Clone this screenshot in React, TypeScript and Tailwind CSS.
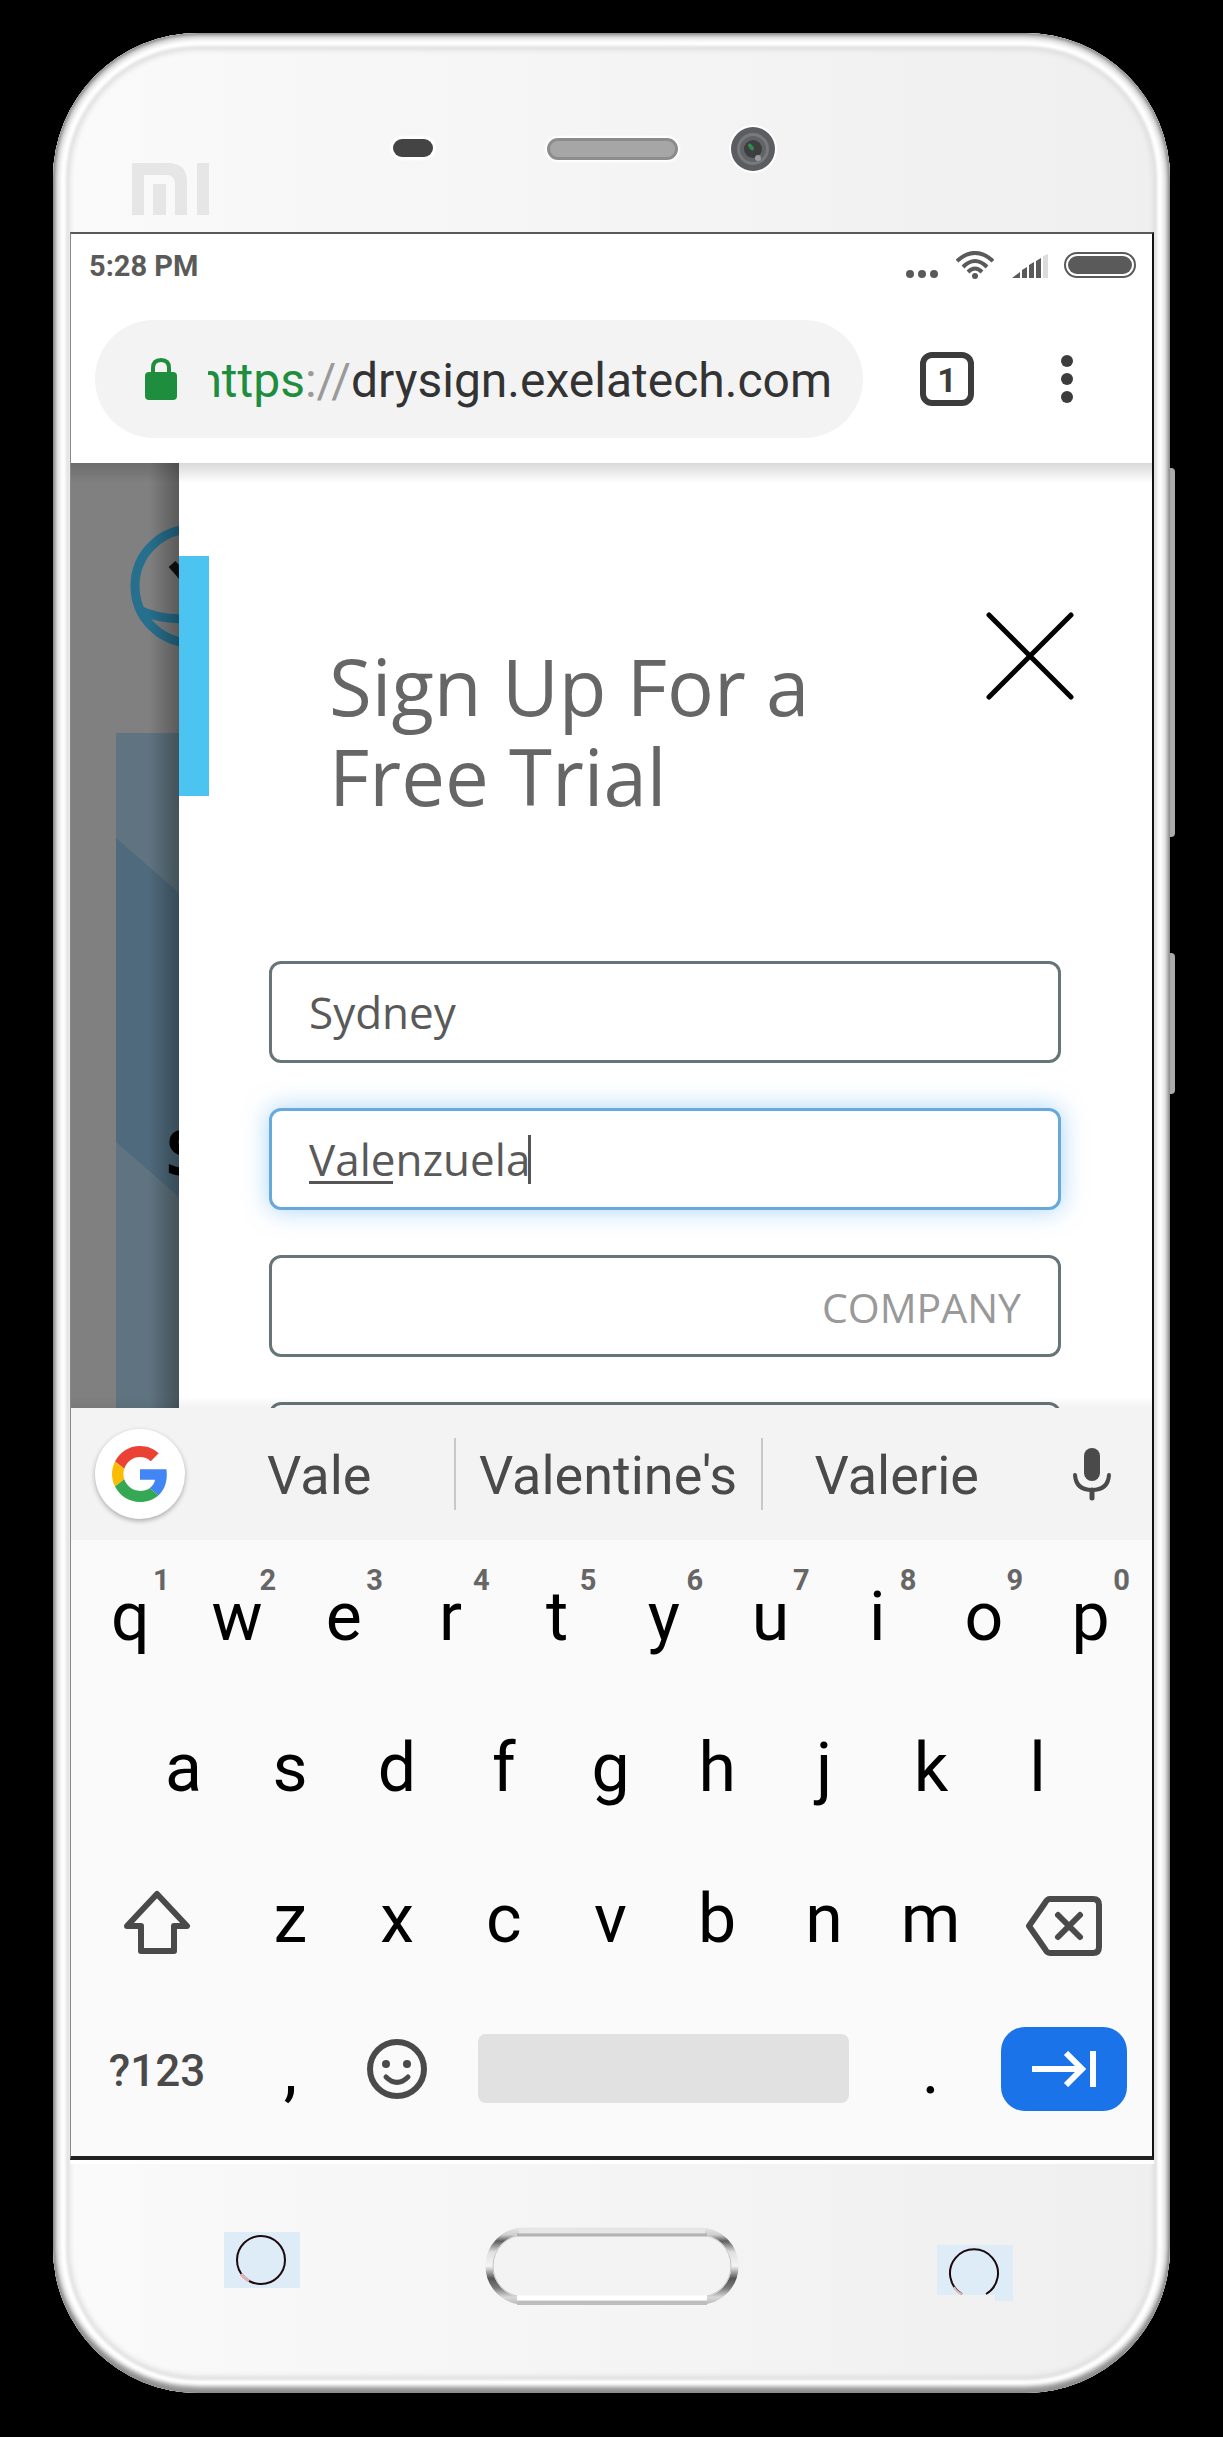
import React from "react";

const topRow = ["q", "w", "e", "r", "t", "y", "u", "i", "o", "p"];
const homeRow = ["a", "s", "d", "f", "g", "h", "j", "k", "l"];
const bottomRow = ["z", "x", "c", "v", "b", "n", "m"];

function MiLogo() {
  return (
    <svg viewBox="0 0 77 52" className="h-[52px] w-[77px]" fill="#e6e6e6" aria-label="Mi" role="img">
      <path d="M0 0H36Q55 0 55 19V52H43V21Q43 12 34 12H12V52H0Z" />
      <rect x="21" y="21" width="13" height="31" />
      <rect x="65" y="0" width="12" height="52" />
    </svg>
  );
}

function Camera() {
  return (
    <svg viewBox="0 0 48 48" className="size-12" aria-hidden="true">
      <circle cx="24" cy="24" r="24" fill="#fff" />
      <circle cx="24" cy="24" r="22" fill="#5b5d60" />
      <circle cx="24" cy="24" r="16" fill="#77797c" />
      <circle cx="24" cy="24" r="13" fill="#616366" />
      <circle cx="24" cy="24" r="9" fill="#3c3e40" />
      <ellipse cx="22" cy="22" rx="2" ry="4" fill="#2f8a50" transform="rotate(-35 22 22)" />
      <circle cx="29" cy="33" r="3" fill="#9a9b9d" />
    </svg>
  );
}

function StatusBar() {
  return (
    <div className="flex h-[62px] items-center justify-between pr-4 pl-[18px]">
      <span className="pt-[2px] text-[29px] leading-8 font-bold text-[#5a5a5a]">5:28 PM</span>
      <div className="flex items-center">
        <svg viewBox="0 0 32 28" className="mr-[18px] h-7 w-8" fill="#5a5a5a" aria-hidden="true">
          <circle cx="4" cy="23" r="4" />
          <circle cx="16" cy="23" r="4" />
          <circle cx="28" cy="23" r="4" />
        </svg>
        <svg viewBox="0 0 38 28" className="mr-[18px] h-7 w-[38px]" fill="none" stroke="#5a5a5a" strokeWidth="4" aria-label="Wi-Fi" role="img">
          <path d="M1 10Q19 -6 37 10" />
          <path d="M7 16Q19 4 31 16" />
          <path d="M12 21Q19 14 26 21" />
          <circle cx="19" cy="25" r="3" fill="#5a5a5a" stroke="none" />
        </svg>
        <svg viewBox="0 0 37 28" className="mr-[15px] h-7 w-[37px]" fill="#5a5a5a" aria-label="Signal" role="img">
          <path d="M0 27L8 21V27Z" />
          <path d="M10 27V19L15 16V27Z" />
          <path d="M17 27V14L22 11V27Z" />
          <path d="M24 27V10L29 7V27Z" />
          <path d="M31 27V5L36 3V27Z" fill="#dcdcdc" />
        </svg>
        <div className="h-[26px] w-[72px] rounded-full border-2 border-[#5a5a5a] p-[2px]">
          <div className="h-full rounded-full bg-[#5a5a5a]" />
        </div>
      </div>
    </div>
  );
}

function BrowserBar() {
  return (
    <div className="flex items-center pt-6 pr-[59px] pb-[25px] pl-6">
      <div className="flex h-[118px] min-w-0 flex-1 items-center rounded-full bg-[#f3f3f4] pr-[31px] pl-[50px]">
        <svg viewBox="0 0 32 42" className="h-[42px] w-8 shrink-0" aria-label="Secure" role="img">
          <rect x="0" y="14" width="32" height="28" rx="4" fill="#1e8e3e" />
          <path d="M8 16V10Q8 2 16 2Q24 2 24 10V16" fill="none" stroke="#1e8e3e" strokeWidth="4" />
        </svg>
        <a href="#address" className="ml-[31px] flex min-w-0 flex-1 justify-end overflow-hidden pt-1 text-[48px] leading-[60px] whitespace-nowrap">
          <span className="text-[#1e8e3e]">https</span>
          <span className="text-[#9a9a9a]">://</span>
          <span className="text-[#333333]">drysign.exelatech.com</span>
        </a>
      </div>
      <button aria-label="Open tabs" className="ml-[57px] flex size-[54px] items-center justify-center rounded-xl border-[6px] border-[#3c3c3c] pt-[2px] text-[34px] leading-none font-bold text-[#3c3c3c]">
        1
      </button>
      <button aria-label="Menu" className="ml-[67px] flex h-[54px] w-[52px] flex-col items-center justify-between py-[3px]">
        <span className="size-3 rounded-full bg-[#3c3c3c]" />
        <span className="size-3 rounded-full bg-[#3c3c3c]" />
        <span className="size-3 rounded-full bg-[#3c3c3c]" />
      </button>
    </div>
  );
}

function DimmedPage() {
  return (
    <div className="relative flex w-[108px] shrink-0 flex-col overflow-hidden bg-[#808080]" aria-hidden="true">
      <div className="flex h-[270px] pt-[61px] pl-[59px]">
        <svg viewBox="0 0 124 124" className="size-[124px] shrink-0" fill="none" stroke="#266f8d" strokeWidth="9">
          <circle cx="62" cy="62" r="57" />
          <path d="M9 86Q40 100 80 92" />
          <path d="M42 40L58 58" stroke="#111" strokeWidth="9" />
        </svg>
      </div>
      <div className="relative ml-[45px] flex-1 bg-[#5f7480]">
        <svg viewBox="0 0 63 675" preserveAspectRatio="none" className="h-full w-full">
          <path d="M0 105L63 160V464L0 409Z" fill="#4f6a7c" />
        </svg>
        <span className="absolute top-[384px] left-[50px] font-['Open_Sans'] text-[62px] leading-[68px] font-bold text-black">S</span>
      </div>
    </div>
  );
}

const fieldClass =
  "block h-[102px] w-full rounded-xl border-[3px] border-[#67747a] bg-white px-[37px] text-[44px] text-[#595959] outline-none placeholder:text-right placeholder:text-[41px] placeholder:text-[#999]";

function SignUpPanel() {
  return (
    <section className="relative min-w-0 flex-1 overflow-hidden bg-white pt-[93px] font-['Open_Sans',sans-serif]">
      <div className="flex h-60 items-start">
        <div className="h-60 w-[30px] shrink-0 bg-[#4cc4f2]" />
        <h1 className="mt-[85px] ml-[120px] max-w-[640px] text-[78px] leading-[90px] text-[#666]">
          Sign Up For a
          <br />
          Free Trial
        </h1>
        <button aria-label="Close" className="mt-[56px] mr-[78px] ml-auto">
          <svg viewBox="0 0 88 88" className="size-[88px]" stroke="#000" strokeWidth="5" strokeLinecap="round">
            <path d="M3 3L85 85M85 3L3 85" />
          </svg>
        </button>
      </div>
      <form className="mt-[165px] flex flex-col gap-[45px] pr-[91px] pl-[90px]">
        <input aria-label="First name" defaultValue="Sydney" className={fieldClass} />
        <div className="relative">
          <input
            aria-label="Last name"
            defaultValue="Valenzuela"
            className="block h-[102px] w-full rounded-xl border-[3px] border-[#68a9dc] bg-white px-[37px] text-[44px] text-[#595959] shadow-[0_0_24px_rgba(80,170,240,0.5)] outline-none"
          />
          <span className="absolute top-[73px] left-10 h-[3px] w-[84px] bg-[#555]" />
          <span className="absolute top-[27px] left-[259px] h-[49px] w-[3px] bg-[#555]" />
        </div>
        <input aria-label="Company" placeholder="COMPANY" className={fieldClass} />
        <input aria-label="Email" className={fieldClass} />
      </form>
    </section>
  );
}

function GoogleG() {
  return (
    <svg viewBox="0 0 48 48" className="size-14" aria-hidden="true">
      <path fill="#EA4335" d="M24 9.5c3.54 0 6.71 1.22 9.21 3.6l6.85-6.85C35.9 2.38 30.47 0 24 0 14.62 0 6.51 5.38 2.56 13.22l7.98 6.19C12.43 13.72 17.74 9.5 24 9.5z" />
      <path fill="#4285F4" d="M46.98 24.55c0-1.57-.15-3.09-.38-4.55H24v9.02h12.94c-.58 2.96-2.26 5.48-4.78 7.18l7.73 6c4.51-4.18 7.09-10.36 7.09-17.65z" />
      <path fill="#FBBC05" d="M10.53 28.59c-.48-1.45-.76-2.99-.76-4.59s.27-3.14.76-4.59l-7.98-6.19C.92 16.46 0 20.12 0 24c0 3.88.92 7.54 2.56 10.78l7.97-6.19z" />
      <path fill="#34A853" d="M24 48c6.48 0 11.93-2.13 15.89-5.81l-7.73-6c-2.15 1.45-4.92 2.3-8.16 2.3-6.26 0-11.57-4.22-13.47-9.91l-7.98 6.19C6.51 42.62 14.62 48 24 48z" />
    </svg>
  );
}

function Suggestions() {
  return (
    <div className="flex h-[132px] items-center bg-[#f3f3f3] pl-6 text-[54px] leading-[60px] text-[#4a4a4a]">
      <button aria-label="Google" className="flex size-[90px] shrink-0 items-center justify-center rounded-full bg-white shadow-[0_2px_5px_rgba(0,0,0,0.3)]">
        <GoogleG />
      </button>
      <button className="h-[72px] flex-1 pt-1">Vale</button>
      <button className="h-[72px] w-[309px] border-x-2 border-[#c8c8c8] pt-1">Valentine's</button>
      <button className="h-[72px] flex-1 pt-1">Valerie</button>
      <button aria-label="Voice input" className="flex w-[121px] shrink-0 justify-center">
        <svg viewBox="0 0 40 54" className="h-[54px] w-10" fill="none" stroke="#4a4a4a" strokeWidth="4" strokeLinecap="round">
          <rect x="12" y="1" width="16" height="33" rx="8" fill="#4a4a4a" stroke="none" />
          <path d="M3 28Q4 43 20 43Q36 43 37 28" />
          <path d="M20 43V51" strokeWidth="5" />
        </svg>
      </button>
    </div>
  );
}

function Key({ label, hint }: { label: string; hint?: string }) {
  return (
    <button className="relative flex h-full min-w-0 flex-2 items-center justify-center pt-[2px]">
      {label}
      {hint !== undefined && (
        <span className="absolute top-6 right-0 w-[45px] text-center text-[29px] leading-8 font-bold text-[#666]">{hint}</span>
      )}
    </button>
  );
}

function Keyboard() {
  return (
    <div className="bg-[#fafafa] pr-2 pb-3 pl-[6px] text-[68px] leading-[80px] text-black">
      <div className="flex h-[151px]">
        {topRow.map((k, i) => (
          <Key key={k} label={k} hint={String((i + 1) % 10)} />
        ))}
      </div>
      <div className="flex h-[151px] px-[53px]">
        {homeRow.map((k) => (
          <Key key={k} label={k} />
        ))}
      </div>
      <div className="flex h-[151px]">
        <button aria-label="Shift" className="flex flex-3 items-center justify-center pt-2">
          <svg viewBox="0 0 68 64" className="h-16 w-[68px]" fill="none" stroke="#4a4a4a" strokeWidth="6" strokeLinejoin="round">
            <path d="M34 4L64 36H51V61H18V36H4Z" />
          </svg>
        </button>
        {bottomRow.map((k) => (
          <Key key={k} label={k} />
        ))}
        <button aria-label="Backspace" className="flex flex-3 items-center justify-center pt-4">
          <svg viewBox="0 0 76 60" className="h-[60px] w-[76px]" fill="none" stroke="#4a4a4a" strokeWidth="6" strokeLinejoin="round" strokeLinecap="round">
            <path d="M24 3H67Q73 3 73 9V51Q73 57 67 57H24Q21 57 19 53L3 30L19 7Q21 3 24 3Z" />
            <path d="M32 19L54 41M54 19L32 41" />
          </svg>
        </button>
      </div>
      <div className="flex h-[151px] items-center">
        <button className="min-w-0 flex-3 pt-1 text-[44px] font-medium text-[#4a4a4a]">?123</button>
        <Key label="," />
        <button aria-label="Emoji" className="flex flex-2 justify-center">
          <svg viewBox="0 0 60 60" className="size-[60px]" fill="none" stroke="#4a4a4a" strokeWidth="6" strokeLinecap="round">
            <circle cx="30" cy="30" r="27" />
            <path d="M19 38Q30 49 41 38" strokeWidth="5" />
            <circle cx="19" cy="25" r="4" fill="#4a4a4a" stroke="none" />
            <circle cx="40" cy="25" r="4" fill="#4a4a4a" stroke="none" />
          </svg>
        </button>
        <div className="min-w-0 flex-8">
          <div className="flex px-7">
            <button aria-label="Space" className="h-[69px] flex-1 rounded-lg bg-[#e1e1e1]" />
          </div>
        </div>
        <Key label="." />
        <div className="flex flex-3 justify-center">
          <button aria-label="Next field" className="flex h-[84px] w-[126px] items-center justify-center rounded-3xl bg-[#1a73e8]">
            <svg viewBox="0 0 64 36" className="h-9 w-16" fill="none" stroke="#fff" strokeWidth="6">
              <path d="M0 18H50M34 2L50 18L34 34M61 0V36" />
            </svg>
          </button>
        </div>
      </div>
    </div>
  );
}

function TouchMark({ clipped }: { clipped?: boolean }) {
  return (
    <svg viewBox="0 0 76 56" className="h-14 w-[76px]" aria-hidden="true">
      <path d={clipped ? "M0 0H76V56H58V50H0Z" : "M0 0H76V56H0Z"} fill="#deecf8" />
      {clipped ? (
        <>
          <path d="M25 49A24 24 0 1 1 49 49" fill="none" stroke="#1c0a0c" strokeWidth="2" />
          <path d="M17 42Q20 47 25 49" fill="none" stroke="#e3b4b4" strokeWidth="2" />
        </>
      ) : (
        <>
          <circle cx="37" cy="28" r="24" fill="none" stroke="#1c0a0c" strokeWidth="2" />
          <path d="M17 42Q20 46 25 49" fill="none" stroke="#e0b0b0" strokeWidth="3" />
        </>
      )}
    </svg>
  );
}

function HomeButton() {
  return (
    <button aria-label="Home">
      <svg viewBox="0 0 254 78" className="h-[78px] w-[254px]" fill="none">
        <defs>
          <linearGradient id="homeRim" x1="0" y1="0" x2="0" y2="78" gradientUnits="userSpaceOnUse">
            <stop offset="0" stopColor="#e8e8e8" />
            <stop offset="0.1" stopColor="#cfcfcf" />
            <stop offset="0.18" stopColor="#5e5e5e" />
            <stop offset="0.32" stopColor="#e0e0e0" />
            <stop offset="0.5" stopColor="#f4f4f4" />
            <stop offset="0.66" stopColor="#555" />
            <stop offset="0.78" stopColor="#7a7a7a" />
            <stop offset="0.9" stopColor="#d8d8d8" />
            <stop offset="1" stopColor="#b8b8b8" />
          </linearGradient>
        </defs>
        <rect x="4" y="4" width="246" height="70" rx="35" stroke="url(#homeRim)" strokeWidth="7" />
        <rect x="8" y="8" width="238" height="62" rx="31" fill="#f3f3f3" stroke="#c4c4c4" strokeWidth="1" />
        <path d="M34 4H220" stroke="#e6e6e6" strokeWidth="5" />
        <path d="M32 8H222" stroke="#b2b2b2" strokeWidth="3" />
        <path d="M32 71H222" stroke="#fff" strokeWidth="5" />
        <path d="M32 76H222" stroke="#bdbdbd" strokeWidth="4" />
      </svg>
    </button>
  );
}

export default function App() {
  return (
    <div className="min-h-screen bg-black px-[53px] pt-[33px] pb-11 font-[Roboto,sans-serif]">
      <div className="relative">
        <div className="absolute top-[435px] -right-[5px] h-[369px] w-3 rounded-sm bg-[#ababab]" />
        <div className="absolute top-[920px] -right-[5px] h-[141px] w-3 rounded-sm bg-[#ababab]" />
        <div className="relative rounded-[145px] bg-linear-to-r from-[#fafafa] to-[#efefef] pr-[16px] pl-[17px] shadow-[inset_0_0_3px_2px_#8c8c8c,inset_0_-6px_4px_0_#999,inset_0_0_4px_6px_#d4d4d4,inset_0_0_3px_13px_#ffffff,inset_0_0_5px_17px_#dedede]">
          <div className="grid h-[199px] grid-cols-[1fr_auto_1fr] items-start">
            <div className="flex items-start justify-between pr-[114px] pl-[62px]">
              <div className="pt-[130px]">
                <MiLogo />
              </div>
              <div className="mt-[106px] h-[18px] w-10 rounded-full bg-[#444] shadow-[0_0_2px_3px_#fff]" />
            </div>
            <div className="mt-[105px] h-[22px] w-[131px] rounded-full border-[3px] border-[#8c8c8c] bg-[#a6a6a6] shadow-[0_0_2px_2px_#fff]" />
            <div className="pt-[92px] pl-[51px]">
              <Camera />
            </div>
          </div>

          <main className="overflow-hidden border-t-2 border-r-2 border-b-4 border-l border-t-[#5a5a5a] border-r-[#111] border-b-[#222] border-l-[#888] bg-white">
            <StatusBar />
            <BrowserBar />
            <div className="relative flex h-[945px] overflow-hidden">
              <DimmedPage />
              <SignUpPanel />
              <div className="pointer-events-none absolute inset-y-0 left-[78px] w-[30px] bg-linear-to-l from-black/30 to-transparent" />
              <div className="pointer-events-none absolute inset-x-0 top-0 h-5 bg-linear-to-b from-black/15 to-transparent" />
              <div className="pointer-events-none absolute inset-x-0 bottom-0 h-3 bg-linear-to-t from-black/5 to-transparent" />
            </div>
            <Suggestions />
            <Keyboard />
          </main>

          <div className="grid h-[233px] grid-cols-[1fr_auto_1fr] items-start border-t-4 border-white pt-[63px]">
            <div className="flex justify-end pt-[5px] pr-[185px]">
              <TouchMark />
            </div>
            <HomeButton />
            <div className="pt-[18px] pl-[198px]">
              <TouchMark clipped />
            </div>
          </div>
        </div>
      </div>
    </div>
  );
}
